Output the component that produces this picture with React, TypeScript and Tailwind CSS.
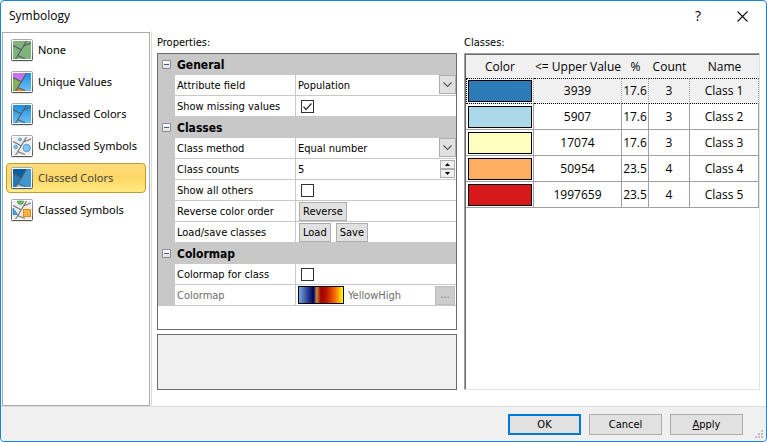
import React, { useState } from "react";

type IconKind = "none" | "unique" | "unclassedColors" | "unclassedSymbols" | "classedColors" | "classedSymbols";

interface Method {
  kind: IconKind;
  label: string;
}

interface ClassRow {
  color: string;
  upper: string;
  percent: string;
  count: number;
  name: string;
}

const methods: Method[] = [
  { kind: "none", label: "None" },
  { kind: "unique", label: "Unique Values" },
  { kind: "unclassedColors", label: "Unclassed Colors" },
  { kind: "unclassedSymbols", label: "Unclassed Symbols" },
  { kind: "classedColors", label: "Classed Colors" },
  { kind: "classedSymbols", label: "Classed Symbols" },
];

const classRows: ClassRow[] = [
  { color: "bg-[#2c7bb6]", upper: "3939", percent: "17.6", count: 3, name: "Class 1" },
  { color: "bg-[#abd9e9]", upper: "5907", percent: "17.6", count: 3, name: "Class 2" },
  { color: "bg-[#ffffbf]", upper: "17074", percent: "17.6", count: 3, name: "Class 3" },
  { color: "bg-[#fdae61]", upper: "50954", percent: "23.5", count: 4, name: "Class 4" },
  { color: "bg-[#d7191c]", upper: "1997659", percent: "23.5", count: 4, name: "Class 5" },
];

const MapIcon = ({ kind }: { kind: IconKind }) => {
  const symbols = kind === "unclassedSymbols" || kind === "classedSymbols";
  return (
    <svg className="shrink-0" width="22" height="23" viewBox="0 0 22 23">
      <defs>
        <linearGradient id="frame" x1="0" y1="0" x2="0" y2="1">
          <stop offset="0" stopColor="#aaa" />
          <stop offset="1" stopColor="#555" />
        </linearGradient>
        <linearGradient id="blue" x1="0" y1="0" x2="0" y2="1">
          <stop offset="0" stopColor="#1a8fe0" />
          <stop offset="1" stopColor="#6cc0f8" />
        </linearGradient>
      </defs>
      <rect x="0.5" y="1.5" width="21" height="21" rx="1" fill="#ccc" />
      <rect x="0.5" y="0.5" width="21" height="21" rx="1" fill="#fff" stroke="url(#frame)" />
      {kind === "none" && <rect x="2" y="2" width="18" height="18" fill="#7fb57b" />}
      {kind === "unclassedColors" && <rect x="2" y="2" width="18" height="18" fill="url(#blue)" />}
      {kind === "unique" && (
        <>
          <rect x="2" y="2" width="18" height="18" fill="url(#blue)" />
          <path d="M2 2H15.5L10.5 11L2 6.5Z" fill="#c774ea" />
          <path d="M2 6.5L10.5 11L6 18L4.5 20H2Z" fill="#83b45a" />
          <path d="M4.5 20L6.5 16.500L13.5 19V20Z" fill="#f08a1c" />
        </>
      )}
      {kind === "classedColors" && (
        <>
          <rect x="2" y="2" width="18" height="18" fill="#3f96d2" />
          <path d="M2 2H15.5L10.5 11L2 6.5Z" fill="#085f9f" />
          <path d="M2 6.5L10.5 11L6 18L4.5 20H2Z" fill="#207bb8" />
          <path d="M4.5 20L6.5 16.500L13.5 19V20Z" fill="#8fc9f0" />
        </>
      )}
      {symbols && <rect x="2" y="2" width="18" height="18" fill="#ededed" />}
      {kind === "classedSymbols" && <path d="M2 9L6.5 15.5H2Z" fill="#4aa3de" stroke="#1e75b3" strokeWidth="0.7" />}
      <path
        d={kind === "unique" || kind === "classedColors"
          ? "M15.5 2L6 18L4.5 20M2 6.5L10.5 11M6.5 16.5L14 19.5"
          : "M15.5 2L6 18L4.5 20M2 6.5L10.5 11M6.5 16.5L14 19.5M12.5 7L20 4"}
        fill="none"
        stroke={symbols ? "#777" : "#555d63"}
        strokeWidth="1.2"
      />
      {kind === "unclassedSymbols" && (
        <g fill="#80c4f2" stroke="#3f8fc6" strokeWidth="0.8">
          <circle cx="9" cy="4.5" r="1.4" />
          <circle cx="4.7" cy="12" r="1.7" />
          <circle cx="15.7" cy="13" r="3.7" />
        </g>
      )}
      {kind === "classedSymbols" && (
        <>
          <path d="M6.5 2H12.5L12 4.5Q9.500 6.500 7 4.5Z" fill="#6cbb62" stroke="#479640" strokeWidth="0.7" />
          <rect x="12.5" y="10.5" width="7" height="7" fill="#fdb03e" stroke="#e58a12" />
        </>
      )}
    </svg>
  );
};

const Chevron = () => (
  <span className="pointer-events-none absolute top-0 right-0 flex h-[19px] w-[17px] items-center justify-center border border-[#adadad] bg-[#e1e1e1]">
    <svg width="9" height="6" viewBox="0 0 9 6">
      <path d="M0.5 0.5L4.5 4.5L8.5 0.5" fill="none" stroke="#555" strokeWidth="1.1" />
    </svg>
  </span>
);

const GroupHeader = ({ title }: { title: string }) => (
  <div className="flex h-[21px] items-center bg-[#c8c8c8]">
    <button aria-label={title} className="ml-1 flex h-[9px] w-[9px] items-center justify-center rounded-[1px] border border-[#8c8c8c] bg-gradient-to-b from-white to-[#e2e2e2]">
      <span className="h-px w-[5px] bg-[#3c5aa0]" />
    </button>
    <h2 className="ml-[6px] text-xs leading-4 font-bold">{title}</h2>
  </div>
);

interface PropertyProps {
  label: string;
  htmlFor?: string;
  disabled?: boolean;
  children: React.ReactNode;
}

const Property = ({ label, htmlFor, disabled, children }: PropertyProps) => (
  <div className="flex h-[21px] pl-[17px]">
    <label
      htmlFor={htmlFor}
      className={`flex w-[121px] shrink-0 items-center border-r border-b border-[#c8c8c8] bg-white pt-[2px] pl-[2px] ${disabled ? "text-[#6d6d6d]" : ""}`}
    >
      {label}
    </label>
    <div className="relative flex min-w-0 flex-1 items-center border-b border-[#c8c8c8] bg-white">{children}</div>
  </div>
);

interface CheckProps {
  id: string;
  checked: boolean;
  onChange: (value: boolean) => void;
}

const Check = ({ id, checked, onChange }: CheckProps) => (
  <span className="relative ml-[5px] h-[13px] w-[13px]">
    <input
      id={id}
      type="checkbox"
      checked={checked}
      onChange={(e) => onChange(e.target.checked)}
      className="block h-[13px] w-[13px] appearance-none border border-[#333] bg-white"
    />
    {checked && (
      <svg className="pointer-events-none absolute inset-0" width="13" height="13" viewBox="0 0 13 13">
        <path d="M2.5 6.5L5 9.5L10.5 3.5" fill="none" stroke="#333" strokeWidth="1.2" />
      </svg>
    )}
  </span>
);

const smallButton = "h-[19px] border border-[#adadad] bg-[#e1e1e1] px-[3px] pt-px";
const dialogButton = "h-[21px] w-[73px] bg-[#e1e1e1] pt-px";

export default function App() {
  const [selected, setSelected] = useState<IconKind>("classedColors");
  const [missing, setMissing] = useState(true);
  const [others, setOthers] = useState(false);
  const [perClass, setPerClass] = useState(false);
  const [count, setCount] = useState(5);

  return (
    <div className="flex min-h-screen flex-col rounded border border-[#1883d7] bg-white font-['DejaVu_Sans_Condensed','DejaVu_Sans',sans-serif] text-[11px] leading-4 text-black">
      <header className="flex h-[30px] items-center pl-2 font-['Open_Sans',sans-serif] text-xs">
        <h1 className="flex-1">Symbology</h1>
        <button aria-label="Help" className="w-[14px] text-sm">?</button>
        <button aria-label="Close" className="mr-[18px] ml-[32px]">
          <svg width="11" height="11" viewBox="0 0 11 11">
            <path d="M0.5 0.5L10.5 10.5M10.5 0.5L0.5 10.5" stroke="#111" strokeWidth="1.1" />
          </svg>
        </button>
      </header>

      <main className="flex flex-1 border-b border-[#dcdcdc]">
        <nav className="mt-px ml-px flex w-[148px] shrink-0 flex-col gap-[2px] border border-[#ababab] px-[3px] py-[2px] font-['Noto_Sans',sans-serif]">
          {methods.map((m) => (
            <button
              key={m.kind}
              onClick={() => setSelected(m.kind)}
              className={`flex h-[30px] items-center gap-[5px] rounded-sm border pl-[4px] text-left ${
                selected === m.kind
                  ? "border-[#c29b29] bg-gradient-to-b from-[#fddc7e] via-[#fed765] to-[#ffec83] text-[#444]"
                  : "border-transparent"
              }`}
            >
              <MapIcon kind={m.kind} />
              {m.label}
            </button>
          ))}
        </nav>

        <div className="ml-px flex min-w-0 flex-1 gap-[7px] border-l border-[#dcdcdc] pt-1 pr-[6px] pb-4 pl-[5px]">
          <section className="flex w-[300px] shrink-0 flex-col">
            <p className="mb-[2px]">Properties:</p>
            <div className="flex-1 border border-[#6b6b6b] bg-white">
              <div className="bg-[#c8c8c8]">
                <GroupHeader title="General" />
                <Property label="Attribute field" htmlFor="field">
                  <select id="field" className="h-5 w-full appearance-none pt-[2px] pl-[2px]">
                    <option>Population</option>
                  </select>
                  <Chevron />
                </Property>
                <Property label="Show missing values" htmlFor="missing">
                  <Check id="missing" checked={missing} onChange={setMissing} />
                </Property>
                <GroupHeader title="Classes" />
                <Property label="Class method" htmlFor="method">
                  <select id="method" className="h-5 w-full appearance-none pt-[2px] pl-[2px]">
                    <option>Equal number</option>
                  </select>
                  <Chevron />
                </Property>
                <Property label="Class counts" htmlFor="counts">
                  <input
                    id="counts"
                    type="text"
                    value={count}
                    onChange={(e) => setCount(Number(e.target.value) || 0)}
                    className="min-w-0 flex-1 pt-[2px] pl-[2px]"
                  />
                  <div className="mr-px flex w-[15px] flex-col">
                    <button aria-label="Increase" onClick={() => setCount(count + 1)} className="flex h-[9px] items-center justify-center border border-[#adadad] bg-[#f0f0f0]">
                      <svg width="5" height="3" viewBox="0 0 5 3"><path d="M0 3L2.5 0L5 3Z" /></svg>
                    </button>
                    <button aria-label="Decrease" onClick={() => setCount(count - 1)} className="flex h-[9px] items-center justify-center border border-[#adadad] bg-[#f0f0f0]">
                      <svg width="5" height="3" viewBox="0 0 5 3"><path d="M0 0L2.5 3L5 0Z" /></svg>
                    </button>
                  </div>
                </Property>
                <Property label="Show all others" htmlFor="others">
                  <Check id="others" checked={others} onChange={setOthers} />
                </Property>
                <Property label="Reverse color order" htmlFor="reverse">
                  <button id="reverse" className={`${smallButton} ml-[3px]`}>Reverse</button>
                </Property>
                <Property label="Load/save classes" htmlFor="load">
                  <button id="load" className={`${smallButton} ml-[3px]`}>Load</button>
                  <button className={`${smallButton} ml-[5px]`}>Save</button>
                </Property>
                <GroupHeader title="Colormap" />
                <Property label="Colormap for class" htmlFor="perclass">
                  <Check id="perclass" checked={perClass} onChange={setPerClass} />
                </Property>
                <Property label="Colormap" htmlFor="colormap" disabled>
                  <span className="ml-[2px] h-[18px] w-[46px] border border-black bg-[linear-gradient(90deg,#7ba7d9_0%,#2a3f94_20%,#00005c_33%,#c08a3c_40%,#a00000_50%,#b81400_62%,#ff6a00_82%,#ffff00_100%)]" />
                  <span className="ml-1 flex-1 pt-[2px] text-[#6d6d6d]">YellowHigh</span>
                  <button id="colormap" disabled className="mr-px h-[19px] w-5 border border-[#bfbfbf] bg-[#cccccc] text-[#777]">
                    ...
                  </button>
                </Property>
              </div>
            </div>
            <div className="mt-1 h-14 border border-[#6b6b6b] bg-[#f0f0f0]" />
          </section>

          <section className="flex min-w-0 flex-1 flex-col">
            <p className="mb-[2px]">Classes:</p>
            <div className="flex-1 border border-t-[#a0a0a0] border-r-[#e3e3e3] border-b-[#e3e3e3] border-l-[#a0a0a0]">
              <div className="h-full border-t border-l border-[#696969]">
                <table className="w-full table-fixed border-separate border-spacing-0 text-center font-['Open_Sans',sans-serif] text-xs leading-4">
                  <colgroup>
                    <col className="w-[68px]" />
                    <col className="w-[88px]" />
                    <col className="w-[27px]" />
                    <col className="w-[41px]" />
                    <col />
                  </colgroup>
                  <thead>
                    <tr className="h-[23px] bg-[#f0f0f0]">
                      {["Color", "<= Upper Value", "%", "Count", "Name"].map((title) => (
                        <th key={title} className="p-0 font-normal whitespace-nowrap">{title}</th>
                      ))}
                    </tr>
                  </thead>
                  <tbody>
                    {classRows.map((row, i) => {
                      const cell =
                        i === 0
                          ? "border-r border-r-[#a0a0a0] border-y border-y-black border-dotted bg-[#f0f0f0] p-0"
                          : "border-r border-b border-[#a0a0a0] p-0";
                      return (
                        <tr key={row.name} className="h-[26px]">
                          <td className={i === 0 ? `${cell} border-l border-l-black` : cell}>
                            <div className={`h-[22px] border border-black ${row.color} ${i === 0 ? "ml-px" : "ml-[2px]"} mr-px`} />
                          </td>
                          <td className={cell}>{row.upper}</td>
                          <td className={cell}>{row.percent}</td>
                          <td className={cell}>{row.count}</td>
                          <td className={cell}>{row.name}</td>
                        </tr>
                      );
                    })}
                  </tbody>
                </table>
              </div>
            </div>
          </section>
        </div>
      </main>

      <footer className="relative flex h-[34px] items-center justify-end gap-2 rounded-b bg-[#f0f0f0] pr-[23px]">
        <button className={`${dialogButton} border-2 border-[#0078d7]`}>OK</button>
        <button className={`${dialogButton} border border-[#adadad]`}>Cancel</button>
        <button className={`${dialogButton} border border-[#adadad]`}>
          <span className="underline">A</span>pply
        </button>
        <svg className="absolute right-[3px] bottom-[3px]" width="8" height="8" viewBox="0 0 8 8" fill="#bfbfbf">
          <path d="M6 0h2v2h-2zM3 3h2v2h-2zM6 3h2v2h-2zM0 6h2v2h-2zM3 6h2v2h-2zM6 6h2v2h-2z" />
        </svg>
      </footer>
    </div>
  );
}
